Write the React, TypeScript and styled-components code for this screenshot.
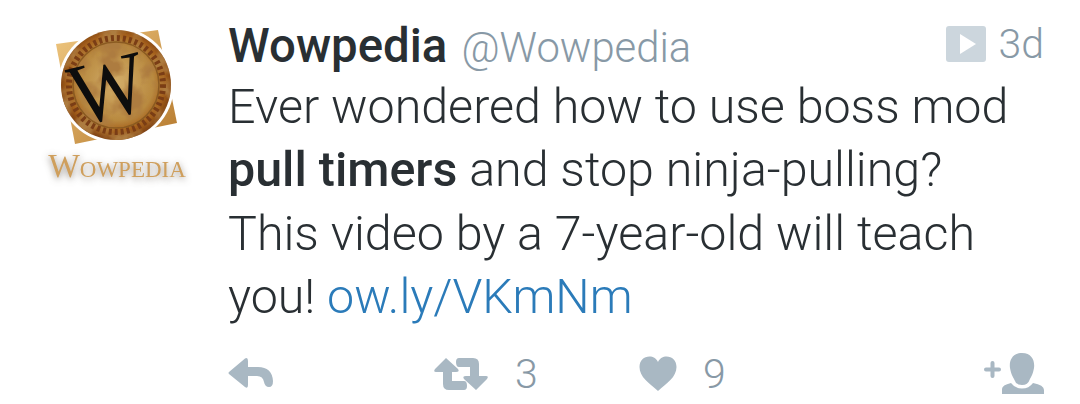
import React from "react";
import styled, { createGlobalStyle } from "styled-components";

const GlobalStyle = createGlobalStyle`
  html, body { margin: 0; padding: 0; background: #fff; }
  body { width: 1080px; height: 404px; overflow: hidden; font-family: Roboto, "Liberation Sans", sans-serif; }
`;

const Tweet = styled.div`
  display: grid;
  grid-template-columns: 229px 1fr;
  width: 1080px;
  height: 404px;
  box-sizing: border-box;
  padding: 16px 36px 0 0;
`;

const AvatarCol = styled.div`
  display: flex;
  flex-direction: column;
  align-items: center;
  padding: 17px 0 0 5px;
  box-sizing: border-box;
`;

const LogoSvg = styled.svg`
  display: block;
  overflow: visible;
  flex: none;
`;

const LogoWord = styled.div`
  margin-top: -12px;
  font-family: "Liberation Serif", serif;
  font-size: 33.5px;
  line-height: 30px;
  font-variant: small-caps;
  white-space: nowrap;
  color: #cf9f5c;
  text-shadow: 0 2px 7px rgba(90, 80, 70, 0.7);
  filter: blur(0.5px);
`;

const Body = styled.div`
  display: flex;
  flex-direction: column;
  min-width: 0;
  margin-left: -1px;
`;

const Head = styled.div`
  display: flex;
  align-items: baseline;
  height: 56px;
  line-height: 56px;
`;

const Name = styled.span`
  font-size: 47.4px;
  font-weight: 500;
  color: #292f33;
`;

const Handle = styled.span`
  margin-left: 14px;
  font-size: 41.8px;
  font-weight: 300;
  color: #8899a6;
`;

const Meta = styled.div`
  margin-left: auto;
  display: flex;
  align-items: center;
  gap: 12px;
  font-size: 41px;
  font-weight: 300;
  color: #8899a6;
`;

const Text = styled.div`
  margin: 3px 0 0;
  font-size: 48.4px;
  line-height: 63.4px;
  font-weight: 300;
  color: #292f33;
  white-space: nowrap;
`;

const Strong = styled.strong`
  font-weight: 500;
`;

const Link = styled.span`
  color: #2b7bb9;
`;

const Actions = styled.div`
  display: grid;
  grid-template-columns: 205px 206px 1fr auto;
  align-items: center;
  margin-top: 23px;
`;

const Action = styled.div`
  display: flex;
  align-items: center;
  gap: 26px;
  font-size: 41px;
  line-height: 44px;
  font-weight: 300;
  color: #8899a6;
`;

function Logo() {
  return (
    <LogoSvg width="150" height="130" viewBox="0 0 150 130" aria-label="Wowpedia">
      <defs>
        <radialGradient id="disc" cx="50%" cy="48%" r="55%">
          <stop offset="0%" stopColor="#d3ae6a" />
          <stop offset="62%" stopColor="#b98a40" />
          <stop offset="80%" stopColor="#a5601c" />
          <stop offset="100%" stopColor="#6e3510" />
        </radialGradient>
        <linearGradient id="corner" x1="0" y1="0" x2="1" y2="1">
          <stop offset="0%" stopColor="#eec67f" />
          <stop offset="100%" stopColor="#b67a2e" />
        </linearGradient>
        <filter id="mottle" x="0" y="0" width="100%" height="100%">
          <feTurbulence type="fractalNoise" baseFrequency="0.05" numOctaves="3" seed="4" />
          <feColorMatrix values="0 0 0 0 0.42  0 0 0 0 0.2  0 0 0 0 0.05  3.2 0 0 0 -1.25" />
          <feComposite in2="SourceGraphic" operator="in" />
        </filter>
        <filter id="soft">
          <feGaussianBlur stdDeviation="0.6" />
        </filter>
      </defs>
      <polygon points="14,11 116,-3 135,90 33,111" fill="url(#corner)" filter="url(#soft)" />
      <circle cx="74" cy="52" r="58" fill="#fff" />
      <g filter="url(#soft)">
        <circle cx="74" cy="52" r="55" fill="url(#disc)" />
        <circle cx="74" cy="52" r="55" fill="#000" filter="url(#mottle)" />
        <circle cx="74" cy="52" r="47" fill="none" stroke="#7a3e12" strokeWidth="6" strokeDasharray="3 3" />
        <circle cx="74" cy="52" r="43" fill="none" stroke="#8a5a20" strokeWidth="1.5" />
        <text
          textAnchor="middle"
          fontFamily="'Liberation Serif', serif"
          fontSize="80"
          fill="#0c0a08"
          transform="translate(73 84) rotate(-14) scale(1 1.1)"
        >
          W
        </text>
      </g>
    </LogoSvg>
  );
}

function ReplyIcon() {
  return (
    <svg width="46" height="34" viewBox="0 0 46 34" fill="#a9b8c3">
      <path d="M1 15 L17 1.500 Q20 0 20 4 L20 10 L30 10 Q44 10 45 24 Q45 30 41 30 Q37 30 36 25 Q35 19 29 19 L20 19 L20 28 Q20 32 17 30 L1 17 Q0 16 1 15 Z" />
    </svg>
  );
}

function RetweetIcon() {
  return (
    <svg width="56" height="34" viewBox="0 0 56 34" fill="#a9b8c3">
      <path d="M13 1 L25 12 Q27 15 23 15 L19 15 L19 24 L31 24 Q34 24 34 29 Q34 33 31 33 L16 33 Q10 33 10 27 L10 15 L3 15 Q0 15 2 12 Z" />
      <path d="M43 33 L31 22 Q29 19 33 19 L37 19 L37 10 L26 10 Q23 10 23 5 Q23 1 26 1 L40 1 Q46 1 46 7 L46 19 L53 19 Q56 19 54 22 Z" />
    </svg>
  );
}

function HeartIcon() {
  return (
    <svg width="38" height="36" viewBox="0 0 38 36" fill="#a9b8c3">
      <path d="M19 35 C10 27 0.5 21 0.5 11 C0.5 4.5 5 0.5 10.500 0.5 C14 0.5 17 2 19 6 C21 2 24 0.5 27.500 0.5 C33 0.5 37.500 4.5 37.500 11 C37.500 21 28 27 19 35 Z" />
    </svg>
  );
}

function FollowIcon() {
  return (
    <svg width="60" height="41" viewBox="0 0 60 41" fill="#a9b8c3">
      <path d="M6.500 11 L6.500 10 Q6.500 8 8.500 8 Q10.500 8 10.500 10 L10.500 14.500 L15 14.500 Q17 14.500 17 16.500 Q17 18.500 15 18.500 L10.500 18.500 L10.500 23 Q10.500 25 8.500 25 Q6.500 25 6.500 23 L6.500 18.500 L2 18.500 Q0 18.500 0 16.500 Q0 14.500 2 14.500 L6.500 14.500 Z" />
      <path d="M38 0 C48 0 51 8 50 15 C49 21 47 24 45.500 27 Q44 32 38 32 Q32 32 30.500 27 C29 24 27 21 26 15 C25 8 28 0 38 0 Z" />
      <path d="M18 41 L18 36 Q18 32 27 30 Q31 35.500 38 35.500 Q45 35.500 49 30 Q60 32 60 37 L60 41 Z" />
    </svg>
  );
}

export default function App() {
  return (
    <>
      <GlobalStyle />
      <Tweet>
        <AvatarCol>
          <Logo />
          <LogoWord>Wowpedia</LogoWord>
        </AvatarCol>
        <Body>
          <Head>
            <Name>Wowpedia</Name>
            <Handle>@Wowpedia</Handle>
            <Meta>
              <svg width="40" height="36" viewBox="0 0 40 36">
                <rect width="40" height="36" rx="3" fill="#ccd6dd" />
                <polygon points="14,8 30,18 14,28" fill="#fff" />
              </svg>
              3d
            </Meta>
          </Head>
          <Text>
            Ever wondered how to use boss mod
            <br />
            <Strong>pull timers</Strong> and stop ninja-pulling?
            <br />
            This video by a 7-year-old will teach
            <br />
            you! <Link>ow.ly/VKmNm</Link>
          </Text>
          <Actions>
            <Action>
              <ReplyIcon />
            </Action>
            <Action>
              <RetweetIcon />3
            </Action>
            <Action>
              <HeartIcon />9
            </Action>
            <Action>
              <FollowIcon />
            </Action>
          </Actions>
        </Body>
      </Tweet>
    </>
  );
}
